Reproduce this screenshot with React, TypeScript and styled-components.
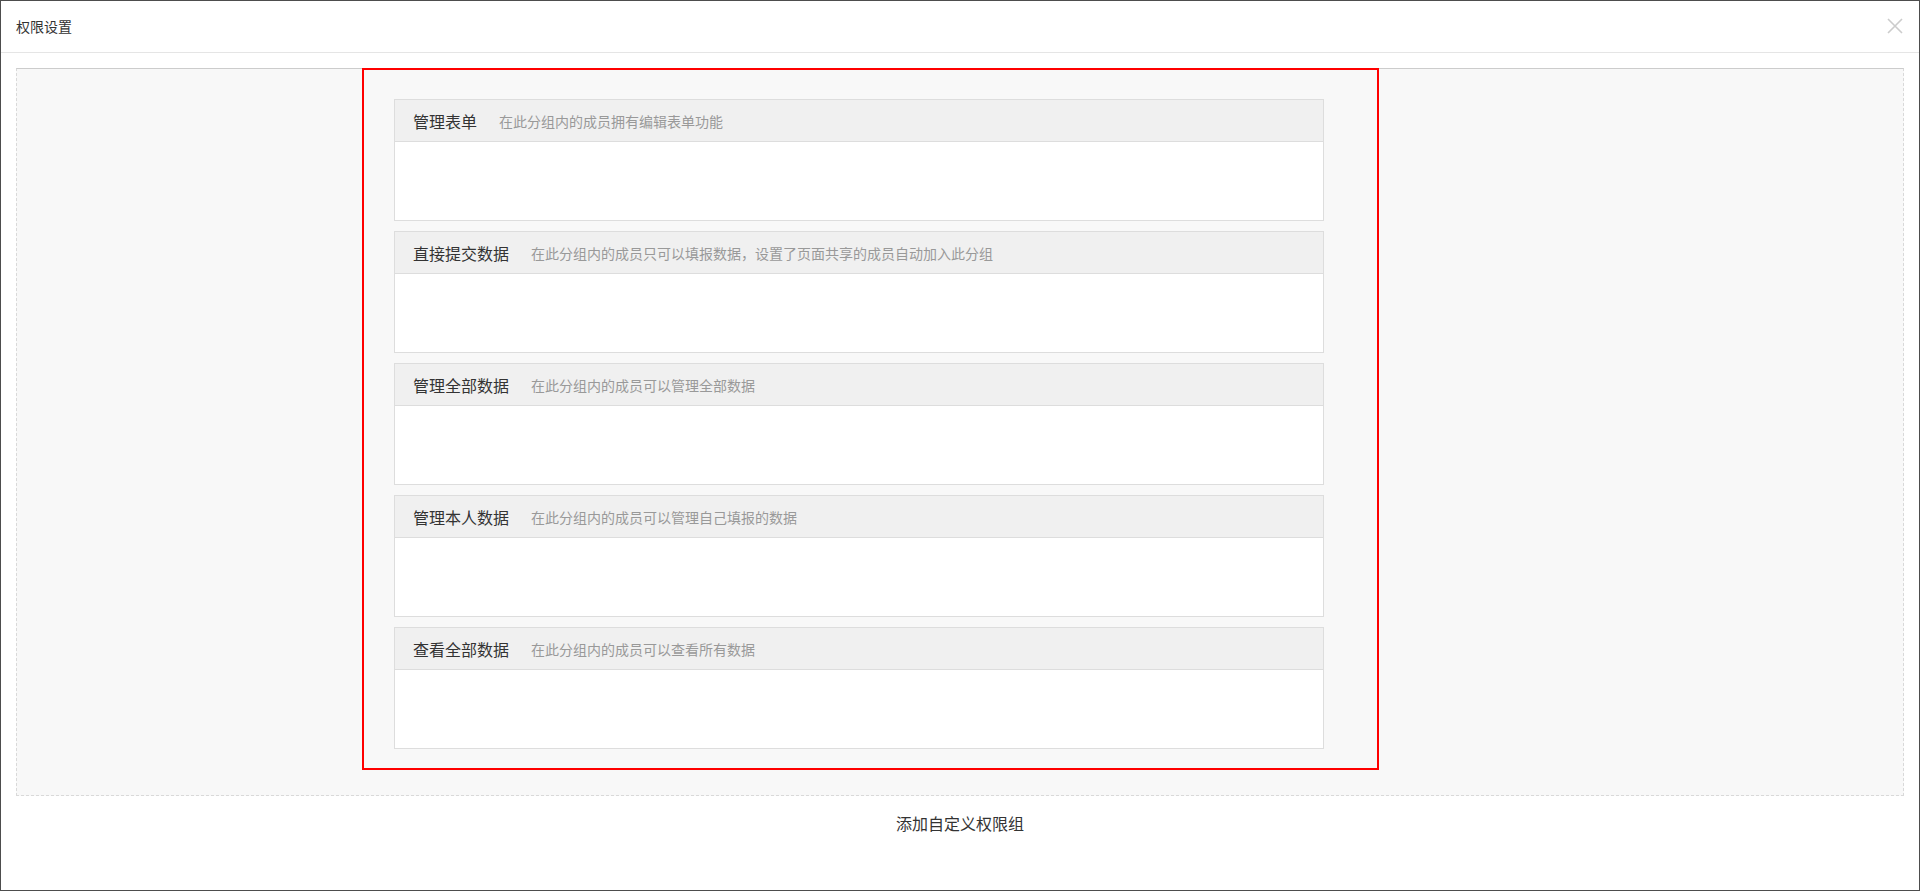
import React from "react";
import styled, { createGlobalStyle } from "styled-components";

const GlobalStyle = createGlobalStyle`
  html, body {
    margin: 0;
    padding: 0;
    background: #ffffff;
  }
  * {
    box-sizing: border-box;
  }
  body {
    font-family: "Noto Sans CJK SC", "Noto Sans", "Liberation Sans", sans-serif;
    color: #333333;
  }
`;

const Frame = styled.div`
  width: 1920px;
  height: 891px;
  border: 1px solid #4d4d4d;
  background: #ffffff;
  display: flex;
  flex-direction: column;
`;

const Header = styled.div`
  height: 52px;
  flex-shrink: 0;
  border-bottom: 1px solid #e5e5e5;
  display: flex;
  align-items: center;
  justify-content: space-between;
  padding: 0 16px 2px 15px;
`;

const Title = styled.div`
  font-size: 14px;
  line-height: 20px;
  color: #333333;
`;

const CloseButton = styled.button`
  width: 16px;
  height: 16px;
  padding: 0;
  border: none;
  background: transparent;
  display: flex;
  align-items: center;
  justify-content: center;
  cursor: pointer;
`;

const Body = styled.div`
  padding: 15px 15px 0 15px;
`;

const DropArea = styled.div`
  background: #f8f8f8;
  border: 1px dashed #d9d9d9;
  border-top: 1px solid #cccccc;
  padding: 0 0 25px 345px;
`;

const Highlight = styled.div`
  width: 1017px;
  margin-top: -1px;
  border: 2px solid #ff0000;
  padding: 29px 53px 19px 30px;
  display: flex;
  flex-direction: column;
  gap: 10px;
`;

const Group = styled.div`
  width: 930px;
  border: 1px solid #dddddd;
  background: #ffffff;
  display: flex;
  flex-direction: column;
`;

const GroupHead = styled.div`
  height: 42px;
  background: #f0f0f0;
  border-bottom: 1px solid #dddddd;
  display: flex;
  align-items: center;
  padding-left: 18px;
`;

const GroupName = styled.span`
  font-size: 16px;
  line-height: 22px;
  color: #333333;
`;

const GroupDesc = styled.span`
  margin-left: 22px;
  font-size: 14px;
  line-height: 20px;
  color: #999999;
`;

const GroupMembers = styled.div`
  height: 78px;
  background: #ffffff;
`;

const Footer = styled.div`
  padding-top: 16px;
  text-align: center;
  font-size: 16px;
  line-height: 22px;
  color: #333333;
  cursor: pointer;
`;

const groups = [
  { name: "管理表单", desc: "在此分组内的成员拥有编辑表单功能" },
  {
    name: "直接提交数据",
    desc: "在此分组内的成员只可以填报数据，设置了页面共享的成员自动加入此分组",
  },
  { name: "管理全部数据", desc: "在此分组内的成员可以管理全部数据" },
  { name: "管理本人数据", desc: "在此分组内的成员可以管理自己填报的数据" },
  { name: "查看全部数据", desc: "在此分组内的成员可以查看所有数据" },
];

export default function App() {
  return (
    <>
      <GlobalStyle />
      <Frame>
        <Header>
          <Title>权限设置</Title>
          <CloseButton aria-label="关闭">
            <svg width="16" height="16" viewBox="0 0 16 16">
              <path
                d="M1 1 L15 15 M15 1 L1 15"
                stroke="#cccccc"
                strokeWidth="1.6"
                fill="none"
              />
            </svg>
          </CloseButton>
        </Header>
        <Body>
          <DropArea>
            <Highlight>
              {groups.map((g) => (
                <Group key={g.name}>
                  <GroupHead>
                    <GroupName>{g.name}</GroupName>
                    <GroupDesc>{g.desc}</GroupDesc>
                  </GroupHead>
                  <GroupMembers />
                </Group>
              ))}
            </Highlight>
          </DropArea>
        </Body>
        <Footer>添加自定义权限组</Footer>
      </Frame>
    </>
  );
}
